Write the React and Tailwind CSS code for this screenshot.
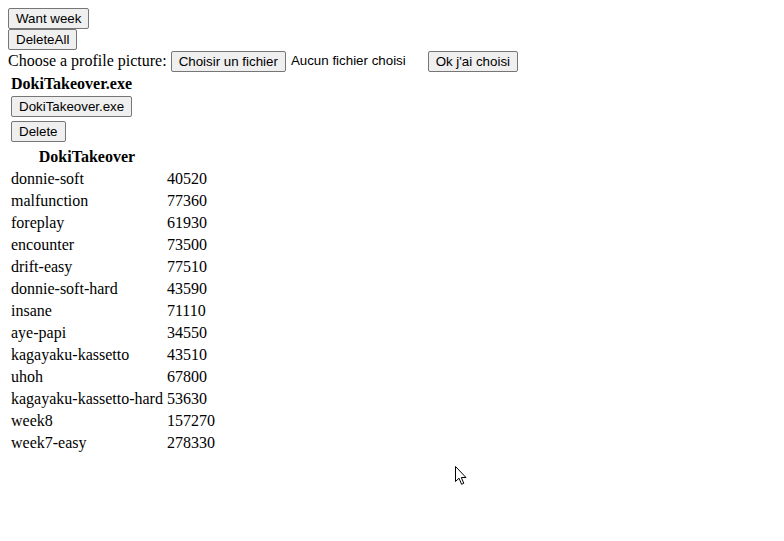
import React from 'react';

const scores = [
  ['donnie-soft', '40520'],
  ['malfunction', '77360'],
  ['foreplay', '61930'],
  ['encounter', '73500'],
  ['drift-easy', '77510'],
  ['donnie-soft-hard', '43590'],
  ['insane', '71110'],
  ['aye-papi', '34550'],
  ['kagayaku-kassetto', '43510'],
  ['uhoh', '67800'],
  ['kagayaku-kassetto-hard', '53630'],
  ['week8', '157270'],
  ['week7-easy', '278330'],
];

const Btn = ({ children }) => (
  <button className="h-[21px] px-[7px] bg-[#efefef] border border-[#767676] rounded-[2px] text-[13.333px] leading-[15px] font-['Liberation_Sans',Arial,sans-serif] text-black whitespace-nowrap">
    {children}
  </button>
);

const Cursor = () => (
  <svg width="13" height="20" viewBox="0 0 13 20" className="absolute left-[455px] top-[466px]">
    <path d="M0.5 0.5 L0.5 15.5 L4 12.2 L6.6 18.3 L8.8 17.3 L6.3 11.5 L11 11.5 Z" fill="#fff" stroke="#000" strokeWidth="1" strokeLinejoin="miter" />
  </svg>
);

export default function App() {
  return (
    <div className="relative w-[784px] h-[541px] bg-white p-2 font-['Liberation_Serif','Times_New_Roman',serif] text-base text-black">
      <div className="flex flex-col items-start">
        <Btn>Want week</Btn>
        <Btn>DeleteAll</Btn>
        <div className="flex items-center h-[22px] gap-[4px]">
          <span className="leading-[18px]">Choose a profile picture:</span>
          <div className="flex items-center w-[253px] gap-[5px]">
            <Btn>Choisir un fichier</Btn>
            <span className="text-[13.333px] font-['Liberation_Sans',Arial,sans-serif]">Aucun fichier choisi</span>
          </div>
          <Btn>Ok j'ai choisi</Btn>
        </div>
      </div>

      {/* fichier en cours */}
      <div className="flex flex-col items-start gap-[2px] p-[2px]">
        <div className="p-[1px] font-bold leading-[17px]">DokiTakeover.exe</div>
        <div className="flex p-[1px]"><Btn>DokiTakeover.exe</Btn></div>
        <div className="flex p-[1px]"><Btn>Delete</Btn></div>
      </div>

      {/* scores */}
      <div className="inline-grid grid-cols-[auto_auto] gap-[2px] p-[2px] leading-[18px]">
        <div className="p-[1px] font-bold text-center">DokiTakeover</div>
        <div />
        {scores.map(([name, score]) => (
          <React.Fragment key={name}>
            <div className="p-[1px] whitespace-nowrap">{name}</div>
            <div className="p-[1px]">{score}</div>
          </React.Fragment>
        ))}
      </div>

      <Cursor />
    </div>
  );
}
